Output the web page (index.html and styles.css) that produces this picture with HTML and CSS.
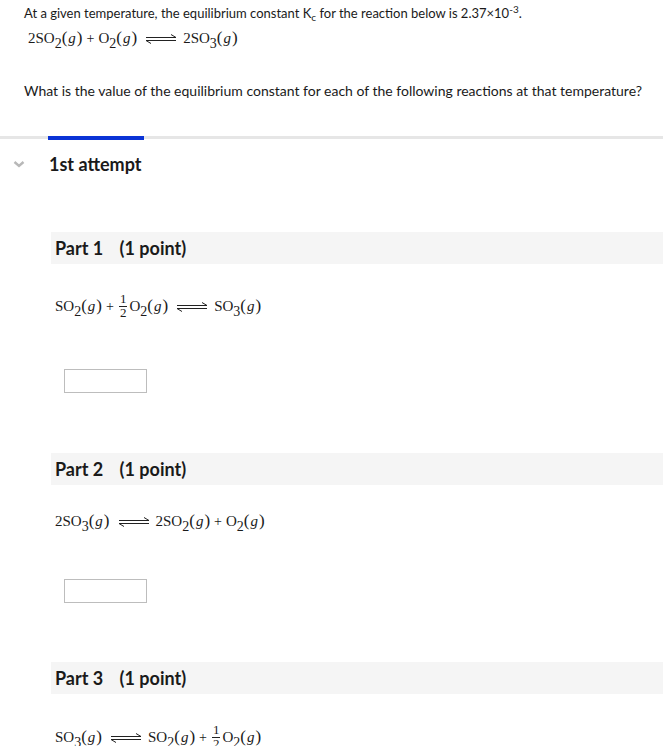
FILE: index.html
```html
<!DOCTYPE html>
<html>
<head>
<meta charset="utf-8">
<link rel="stylesheet" href="styles.css">
</head>
<body>
<div class="intro">
  <p class="line1">At a given temperature, the equilibrium constant K<sub class="ksub">c</sub> for the reaction below is 2.37×10<sup class="exp">-3</sup>.</p>
  <div class="eq eq-top">2SO<sub>2</sub><span class="paren">(</span><i>g</i><span class="paren">)</span><span class="op">+</span>O<sub>2</sub><span class="paren">(</span><i>g</i><span class="paren">)</span><svg class="arrow" width="32" height="10" viewBox="0 0 32 10"><path d="M1 3.5H31M26 0.5L31 3.5" stroke="#222" stroke-width="1" fill="none"/><path d="M31 6.5H1M6 9.5L1 6.5" stroke="#222" stroke-width="1" fill="none"/></svg>2SO<sub>3</sub><span class="paren">(</span><i>g</i><span class="paren">)</span></div>
  <p class="question">What is the value of the equilibrium constant for each of the following reactions at that temperature?</p>
</div>

<div class="tabs"><div class="tab-active"></div></div>

<div class="attempt">
  <svg class="chev" width="14" height="10" viewBox="0 0 14 10"><path d="M2.5 3L7 7L11.5 3" stroke="#b8b8b8" stroke-width="2.4" fill="none"/></svg>
  <span class="attempt-title">1st attempt</span>
</div>

<div class="part part1">
  <div class="part-head">Part 1 <span class="pts">(1 point)</span></div>
  <div class="eq">SO<sub>2</sub><span class="paren">(</span><i>g</i><span class="paren">)</span><span class="op">+</span><span class="frac"><span class="num">1</span><span>2</span></span>O<sub>2</sub><span class="paren">(</span><i>g</i><span class="paren">)</span><svg class="arrow" width="32" height="10" viewBox="0 0 32 10"><path d="M1 3.5H31M26 0.5L31 3.5" stroke="#222" stroke-width="1" fill="none"/><path d="M31 6.5H1M6 9.5L1 6.5" stroke="#222" stroke-width="1" fill="none"/></svg>SO<sub>3</sub><span class="paren">(</span><i>g</i><span class="paren">)</span></div>
  <div class="answer"><input class="box" type="text"></div>
</div>

<div class="part part2">
  <div class="part-head">Part 2 <span class="pts">(1 point)</span></div>
  <div class="eq">2SO<sub>3</sub><span class="paren">(</span><i>g</i><span class="paren">)</span><svg class="arrow" width="32" height="10" viewBox="0 0 32 10"><path d="M1 3.5H31M26 0.5L31 3.5" stroke="#222" stroke-width="1" fill="none"/><path d="M31 6.5H1M6 9.5L1 6.5" stroke="#222" stroke-width="1" fill="none"/></svg>2SO<sub>2</sub><span class="paren">(</span><i>g</i><span class="paren">)</span><span class="op">+</span>O<sub>2</sub><span class="paren">(</span><i>g</i><span class="paren">)</span></div>
  <div class="answer"><input class="box" type="text"></div>
</div>

<div class="part part3">
  <div class="part-head">Part 3 <span class="pts">(1 point)</span></div>
  <div class="eq">SO<sub>3</sub><span class="paren">(</span><i>g</i><span class="paren">)</span><svg class="arrow" width="32" height="10" viewBox="0 0 32 10"><path d="M1 3.5H31M26 0.5L31 3.5" stroke="#222" stroke-width="1" fill="none"/><path d="M31 6.5H1M6 9.5L1 6.5" stroke="#222" stroke-width="1" fill="none"/></svg>SO<sub>2</sub><span class="paren">(</span><i>g</i><span class="paren">)</span><span class="op">+</span><span class="frac"><span class="num">1</span><span>2</span></span>O<sub>2</sub><span class="paren">(</span><i>g</i><span class="paren">)</span></div>
</div>
</body>
</html>
```
FILE: styles.css
```css
html, body {
  margin: 0;
  padding: 0;
  background: #fff;
  font-family: Lato, "Open Sans", sans-serif;
  color: #1a1a1a;
}
.intro {
  padding: 4px 0 0 24px;
}
.intro p {
  margin: 0;
  line-height: 18px;
}
.line1 {
  font-size: 13px;
}
.ksub {
  font-size: 10px;
  vertical-align: -3px;
  line-height: 0;
}
.exp {
  font-size: 10px;
  vertical-align: 5px;
  line-height: 0;
}
.eq {
  font-family: "Liberation Serif", "DejaVu Serif", serif;
  font-size: 15px;
  height: 20px;
  line-height: 20px;
  color: #1a1a1a;
  white-space: nowrap;
}
.eq sub {
  font-size: 14px;
  vertical-align: -5px;
  line-height: 0;
}
.eq i {
  font-style: italic;
  padding: 0 1px;
}
.paren {
  font-size: 17px;
  line-height: 0;
}
.op {
  margin: 0 4px;
  font-size: 14px;
}
.eq-top {
  margin: 6px 0 0 4px;
}
.arrow {
  vertical-align: middle;
  margin: 0 6px 0 8px;
  position: relative;
  top: -1px;
}
.frac {
  display: inline-block;
  vertical-align: middle;
  text-align: center;
  font-size: 13px;
  line-height: 12px;
  margin: 0 2px 0 1px;
  position: relative;
  top: -2px;
}
.frac span {
  display: block;
}
.frac .num {
  border-bottom: 1px solid #222;
  padding: 0 1px 1px;
}
.question {
  font-size: 14px;
  margin-top: 34px !important;
}
.tabs {
  margin-top: 36px;
  height: 3px;
  background: #e6e6e6;
  position: relative;
}
.tab-active {
  position: absolute;
  left: 48px;
  top: 0;
  width: 96px;
  height: 4px;
  background: #0a33d6;
}
.attempt {
  display: flex;
  align-items: center;
  padding: 15px 0 0 12px;
  height: 20px;
}
.chev {
  margin-right: 23px;
}
.attempt-title {
  font-weight: bold;
  font-size: 18px;
}
.part {
  margin-left: 51px;
}
.part-head {
  background: #f5f5f5;
  height: 32px;
  line-height: 32px;
  padding-left: 4px;
  font-weight: bold;
  font-size: 18px;
}
.part-head .pts {
  margin-left: 12px;
}
.part .eq {
  margin-left: 4px;
}
.box {
  display: block;
  width: 83px;
  height: 24px;
  box-sizing: border-box;
  border: 1px solid #bdbdbd;
  margin: 0 0 0 13px;
  padding: 0;
  background: #fff;
}
.part1 .part-head { margin-top: 58px; }
.part1 .eq { margin-top: 31px; }
.part1 .answer { padding-top: 54px; }
.part2 .part-head { margin-top: 60px; }
.part2 .eq { margin-top: 26px; }
.part2 .answer { padding-top: 48px; }
.part3 .part-head { margin-top: 59px; }
.part3 .eq { margin-top: 32px; }
```
